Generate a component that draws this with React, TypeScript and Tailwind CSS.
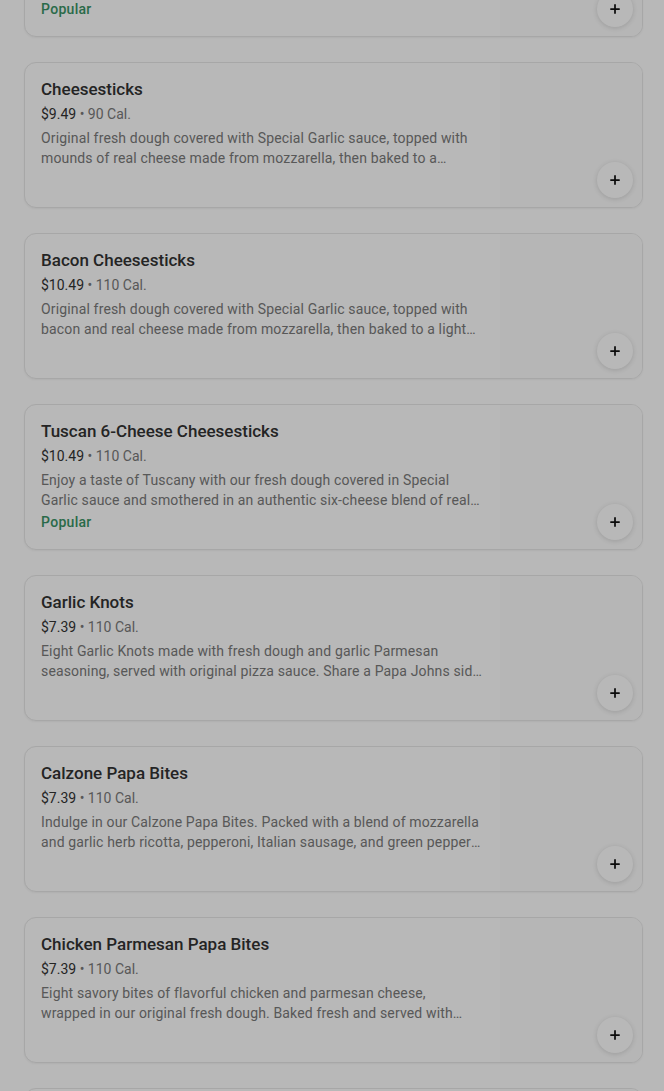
import { Plus } from 'lucide-react';

type MenuItem = {
  name: string;
  price: string;
  cal: string;
  description: string;
  popular?: boolean;
};

const items: MenuItem[] = [
  {
    name: 'Papadia',
    price: '$8.99',
    cal: '450 Cal.',
    description:
      'A crispy, folded flatbread filled with your favorite toppings and baked to perfection, served with a dipping sauce.',
    popular: true,
  },
  {
    name: 'Cheesesticks',
    price: '$9.49',
    cal: '90 Cal.',
    description:
      'Original fresh dough covered with Special Garlic sauce, topped with mounds of real cheese made from mozzarella, then baked to a…',
  },
  {
    name: 'Bacon Cheesesticks',
    price: '$10.49',
    cal: '110 Cal.',
    description:
      'Original fresh dough covered with Special Garlic sauce, topped with bacon and real cheese made from mozzarella, then baked to a light golden brown.',
  },
  {
    name: 'Tuscan 6-Cheese Cheesesticks',
    price: '$10.49',
    cal: '110 Cal.',
    description:
      'Enjoy a taste of Tuscany with our fresh dough covered in Special Garlic sauce and smothered in an authentic six-cheese blend of real cheese.',
    popular: true,
  },
  {
    name: 'Garlic Knots',
    price: '$7.39',
    cal: '110 Cal.',
    description:
      'Eight Garlic Knots made with fresh dough and garlic Parmesan seasoning, served with original pizza sauce. Share a Papa Johns side today.',
  },
  {
    name: 'Calzone Papa Bites',
    price: '$7.39',
    cal: '110 Cal.',
    description:
      'Indulge in our Calzone Papa Bites. Packed with a blend of mozzarella and garlic herb ricotta, pepperoni, Italian sausage, and green peppers, baked in our fresh dough.',
  },
  {
    name: 'Chicken Parmesan Papa Bites',
    price: '$7.39',
    cal: '110 Cal.',
    description:
      'Eight savory bites of flavorful chicken and parmesan cheese, wrapped in our original fresh dough. Baked fresh and served with marinara.',
  },
  {
    name: 'Breadsticks',
    price: '$6.99',
    cal: '140 Cal.',
    description: 'Original fresh dough baked to a golden brown and served with Special Garlic sauce.',
  },
];

function ItemCard({ item }: { item: MenuItem }) {
  return (
    <div className="flex h-[146px] shrink-0 overflow-hidden rounded-xl border border-[#e8e8e8] bg-white shadow-[0_1px_2px_rgba(0,0,0,0.05)]">
      <div className="w-[475px] shrink-0 pl-4 pt-4 pr-4">
        <div className="text-[17px] leading-5 font-medium text-[#333]">{item.name}</div>
        <div className="mt-[5px] text-[14px] leading-5">
          <span className="text-[#333]">{item.price}</span>
          <span className="text-[#7a7a7a]"> • {item.cal}</span>
        </div>
        <p className="mt-1 line-clamp-2 text-[14px] leading-5 tracking-[0.15px] text-[#7a7a7a]">
          {item.description}
        </p>
        {item.popular && (
          <div className="mt-[2px] text-[14px] leading-5 font-medium tracking-[0.3px] text-[#3a9466]">
            Popular
          </div>
        )}
      </div>
      <div className="relative flex-1 bg-[#fcfcfc]">
        <button className="absolute right-[9px] bottom-[9px] flex h-9 w-9 items-center justify-center rounded-full bg-white shadow-[0_1px_5px_rgba(0,0,0,0.14)]">
          <Plus size={14} strokeWidth={3} className="text-[#111]" />
        </button>
      </div>
    </div>
  );
}

export default function App() {
  return (
    <div className="relative h-[1091px] overflow-hidden bg-white font-['Roboto',sans-serif]">
      <div className="ml-6 mr-[21px] -mt-[109px] flex flex-col gap-[25px]">
        {items.map((item) => (
          <ItemCard key={item.name} item={item} />
        ))}
      </div>
      <div className="fixed inset-0 bg-black/[0.28]" />
    </div>
  );
}
